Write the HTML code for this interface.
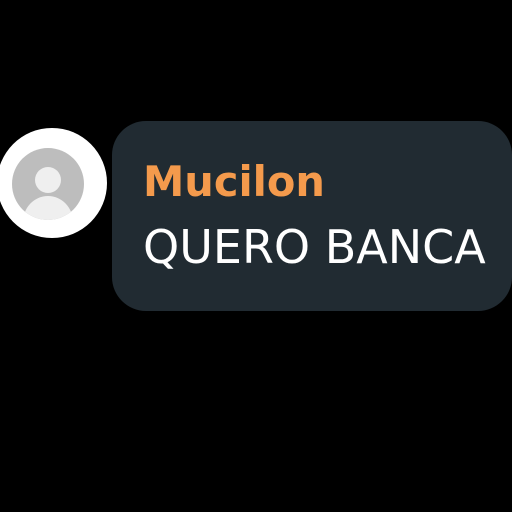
<!DOCTYPE html>
<html><head><style>
html,body{margin:0;padding:0;background:#000;width:512px;height:512px;overflow:hidden}
.b{position:absolute;left:112px;top:121px;width:400px;height:190px;border-radius:34px;background:#212b32}
.t{position:absolute;font-family:"DejaVu Sans","Liberation Sans",sans-serif;white-space:nowrap}
</style></head><body>
<svg style="position:absolute;left:0;top:0" width="512" height="512">
<circle cx="52" cy="183" r="55" fill="#fff"/>
<clipPath id="c"><circle cx="48" cy="184" r="36"/></clipPath>
<circle cx="48" cy="184" r="36" fill="#bdbdbd"/>
<circle cx="48" cy="180" r="13" fill="#efefef"/>
<ellipse cx="48" cy="222" rx="25" ry="26" fill="#efefef" clip-path="url(#c)"/>
</svg>
<div class="b"></div>
<div class="t" style="left:143px;top:157px;font-size:41.5px;font-weight:bold;color:#f49a4c">Mucilon</div>
<div class="t" style="left:143px;top:220px;font-size:46px;color:#fff">QUERO BANCA</div>
</body></html>
